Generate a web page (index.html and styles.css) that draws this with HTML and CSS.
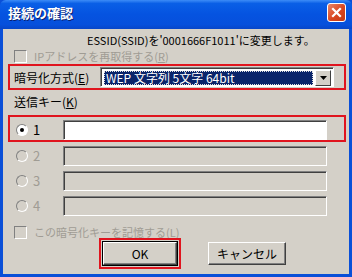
FILE: index.html
```html
<!DOCTYPE html>
<html lang="ja">
<head>
    <meta charset="UTF-8">
    <title>接続の確認</title>
    <link rel="stylesheet" href="styles.css">
</head>
<body>
    <div class="window">
        <div class="titlebar">
            <span class="title">接続の確認</span>
            <span class="close">
                <svg width="11" height="11" viewBox="0 0 11 11"><path d="M2 2 L9 9 M9 2 L2 9" stroke="#fff" stroke-width="2.2" stroke-linecap="square"/></svg>
            </span>
        </div>
        <div class="dialog">
            <div class="message">ESSID(SSID)を'0001666F1011'に変更します。</div>

            <div class="check-row disabled">
                <span class="checkbox"></span>
                <span>IPアドレスを再取得する(<u>R</u>)</span>
            </div>

            <div class="highlight enc-row">
                <span class="label">暗号化方式(<u>E</u>)</span>
                <div class="select">
                    <span class="select-value">WEP 文字列 5文字 64bit</span>
                    <span class="select-btn">
                        <svg width="7" height="4" viewBox="0 0 7 4"><path d="M0 0 H7 L3.5 4 Z" fill="#000"/></svg>
                    </span>
                </div>
            </div>

            <div class="section-label">送信キー(<u>K</u>)</div>

            <div class="highlight key-row first">
                <span class="radio checked"></span>
                <span class="num">1</span>
                <span class="textbox"></span>
            </div>
            <div class="key-row disabled">
                <span class="radio"></span>
                <span class="num">2</span>
                <span class="textbox"></span>
            </div>
            <div class="key-row disabled">
                <span class="radio"></span>
                <span class="num">3</span>
                <span class="textbox"></span>
            </div>
            <div class="key-row disabled">
                <span class="radio"></span>
                <span class="num">4</span>
                <span class="textbox"></span>
            </div>

            <div class="check-row disabled remember">
                <span class="checkbox"></span>
                <span>この暗号化キーを記憶する(<u>L</u>)</span>
            </div>

            <div class="buttons">
                <div class="btn-focus"><button class="btn default">OK</button></div>
                <button class="btn">キャンセル</button>
            </div>
        </div>
    </div>
</body>
</html>
```

FILE: styles.css
```css
html, body {
    margin: 0;
    padding: 0;
}
body {
    font-family: "Noto Sans CJK JP", "DejaVu Sans", sans-serif;
    font-size: 12px;
    color: #000;
    background: #fff;
}
.window {
    width: 352px;
    height: 277px;
    box-sizing: border-box;
    background: #0a4fd8;
    padding: 0 3px 3px 3px;
    display: flex;
    flex-direction: column;
}
.titlebar {
    height: 29px;
    flex: none;
    margin: 0 -3px;
    padding: 0 6px 0 8px;
    display: flex;
    align-items: center;
    justify-content: space-between;
    background: linear-gradient(to bottom, #3d8cf7 0%, #0a5fe6 12%, #0553e0 50%, #0650dc 85%, #0846c8 100%);
    border-radius: 6px 6px 0 0;
}
.title {
    color: #fff;
    font-weight: bold;
    font-size: 13px;
    margin-top: -4px;
    text-shadow: 1px 1px 0 #0a1f6e;
}
.close {
    width: 19px;
    height: 19px;
    margin-top: -4px;
    box-sizing: border-box;
    border: 1px solid #fff;
    border-radius: 3px;
    background: linear-gradient(135deg, #e8866a 0%, #d9461f 55%, #c23a14 100%);
    display: flex;
    align-items: center;
    justify-content: center;
}
.dialog {
    flex: 1;
    background: #d4d0c8;
    display: flex;
    flex-direction: column;
}
.disabled {
    color: #a09c94;
}
.message {
    height: 16px;
    flex: none;
    line-height: 16px;
    font-size: 11px;
    margin-top: 3px;
    padding-left: 84px;
    white-space: nowrap;
}
.check-row {
    height: 16px;
    flex: none;
    line-height: 16px;
    font-size: 11px;
    display: flex;
    align-items: center;
    gap: 7px;
    margin-top: 0;
    padding-left: 11px;
}
.checkbox {
    flex: none;
    width: 13px;
    height: 13px;
    box-sizing: border-box;
    border-top: 1px solid #808080;
    border-left: 1px solid #808080;
    border-right: 1px solid #fff;
    border-bottom: 1px solid #fff;
    background: #d4d0c8;
}
.highlight {
    border: 2px solid #e0141e;
    margin: 0 3px 0 5px;
}
.enc-row {
    height: 26px;
    flex: none;
    box-sizing: border-box;
    display: flex;
    align-items: center;
    padding-left: 4px;
}
.enc-row .label {
    flex: none;
    width: 86px;
}
.select {
    flex: none;
    width: 234px;
    height: 20px;
    box-sizing: border-box;
    border-top: 1px solid #808080;
    border-left: 1px solid #808080;
    border-right: 1px solid #fff;
    border-bottom: 1px solid #fff;
    box-shadow: inset 1px 1px 0 #404040;
    background: #fff;
    display: flex;
    align-items: center;
    padding: 2px 2px 1px 3px;
}
.select-value {
    flex: 1;
    height: 14px;
    line-height: 14px;
    background: #0a246a;
    color: #fff;
    outline: 1px dotted #e0e0e0;
    outline-offset: -1px;
    padding-left: 2px;
    margin-right: 2px;
    white-space: nowrap;
}
.select-btn {
    flex: none;
    width: 16px;
    height: 16px;
    box-sizing: border-box;
    background: #d4d0c8;
    border-top: 1px solid #fff;
    border-left: 1px solid #fff;
    border-right: 1px solid #404040;
    border-bottom: 1px solid #404040;
    display: flex;
    align-items: center;
    justify-content: center;
}
.section-label {
    height: 14px;
    flex: none;
    line-height: 14px;
    margin-top: 5px;
    padding-left: 11px;
}
.key-row {
    height: 25px;
    flex: none;
    box-sizing: border-box;
    display: flex;
    align-items: center;
    padding-left: 13px;
}
.key-row.first {
    height: 27px;
    margin-top: 6px;
    padding-left: 6px;
    padding-top: 2px;
}
.key-row.first + .key-row {
    margin-top: 1px;
}
.radio {
    flex: none;
    width: 12px;
    height: 12px;
    box-sizing: border-box;
    border-radius: 50%;
    border: 1px solid #808080;
    border-right-color: #fff;
    border-bottom-color: #fff;
    background: #d4d0c8;
    position: relative;
}
.radio.checked {
    background: #fff;
}
.radio.checked::after {
    content: "";
    position: absolute;
    left: 3px;
    top: 3px;
    width: 4px;
    height: 4px;
    border-radius: 50%;
    background: #000;
}
.num {
    flex: none;
    width: 30px;
    padding-left: 5px;
    font-size: 13px;
}
.textbox {
    flex: none;
    width: 264px;
    height: 20px;
    box-sizing: border-box;
    border-top: 1px solid #808080;
    border-left: 1px solid #808080;
    border-right: 1px solid #fff;
    border-bottom: 1px solid #fff;
    box-shadow: inset 1px 1px 0 #404040;
    background: #fff;
}
.key-row.disabled .textbox {
    background: #d4d0c8;
}
.remember {
    margin-top: 6px;
}
.buttons {
    flex: none;
    display: flex;
    align-items: center;
    padding-left: 96px;
    margin-top: -2px;
}
.btn-focus {
    flex: none;
    border: 2px solid #e0141e;
    padding: 2px;
    width: 74px;
    height: 23px;
}
.btn {
    flex: none;
    width: 78px;
    height: 23px;
    box-sizing: border-box;
    font-family: inherit;
    font-size: 12px;
    color: #000;
    background: #d4d0c8;
    border-top: 1px solid #fff;
    border-left: 1px solid #fff;
    border-right: 1px solid #404040;
    border-bottom: 1px solid #404040;
    box-shadow: inset -1px -1px 0 #808080;
    padding: 0;
    margin-left: 27px;
}
.btn.default {
    width: 74px;
    margin-left: 0;
    outline: 1px solid #000;
    outline-offset: 0;
}
```
